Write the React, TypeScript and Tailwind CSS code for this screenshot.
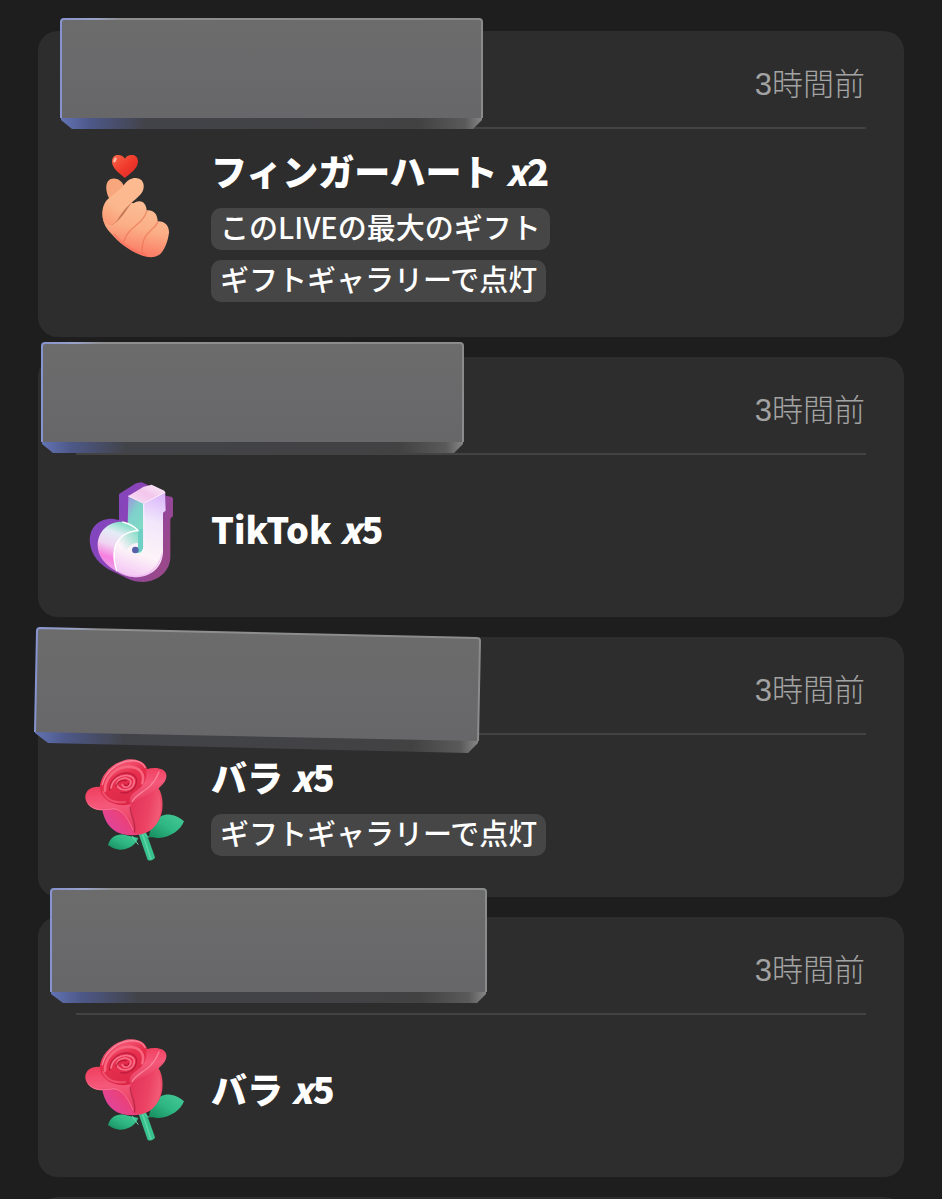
import type { ReactNode } from "react";

type Gift = {
  id: string;
  name: string;
  count: number;
  time: string;
  badges: string[];
  icon: ReactNode;
  slab: ReactNode;
};

function FingerHeartIcon() {
  return (
    <svg
      viewBox="-12 36 348 312"
      className="h-[104px] w-[116px] shrink-0 overflow-visible"
      aria-hidden
    >
      <defs>
        <linearGradient id="heart" x1="0" y1="0" x2="1" y2="1">
          <stop offset="0" stopColor="#f9694a" />
          <stop offset="0.5" stopColor="#f03a2c" />
          <stop offset="1" stopColor="#d92727" />
        </linearGradient>
        <linearGradient
          id="skin"
          gradientUnits="userSpaceOnUse"
          x1="190"
          y1="160"
          x2="150"
          y2="350"
        >
          <stop offset="0" stopColor="#fcc39a" />
          <stop offset="0.55" stopColor="#fbae86" />
          <stop offset="1" stopColor="#fb7360" />
        </linearGradient>
        <linearGradient
          id="index"
          gradientUnits="userSpaceOnUse"
          x1="170"
          y1="120"
          x2="80"
          y2="260"
        >
          <stop offset="0" stopColor="#fdbb91" />
          <stop offset="0.6" stopColor="#fbb78d" />
          <stop offset="1" stopColor="#fb9772" />
        </linearGradient>
      </defs>
      <path
        d="M134 114C120 100 96 86 96 65C96 51 104 44 115 45C124 45 130 49 135 56C139 48 147 44 156 45C167 45 174 53 174 65C173 86 150 101 134 114Z"
        fill="url(#heart)"
      />
      <ellipse
        cx="105"
        cy="60"
        rx="4"
        ry="8"
        fill="#ffd8c8"
        opacity="0.8"
        transform="rotate(25 105 60)"
      />
      <path
        d="M84 168C76 148 76 124 92 117C108 111 124 120 131 136L126 170L92 184Z"
        fill="#f8a67c"
      />
      <path
        d="M68 230C66 204 78 180 98 168L160 190C180 176 199 186 200 211C220 209 233 222 233 244C254 243 268 258 267 278C264 302 254 330 240 343C224 355 200 353 180 344C148 331 116 308 94 281C78 264 70 250 68 230Z"
        fill="url(#skin)"
      />
      <path
        d="M201 212C196 234 176 250 152 270C144 278 136 290 132 304M233 246C228 262 205 274 196 290C188 304 186 320 186 336"
        fill="none"
        stroke="#e8704e"
        strokeWidth="4"
        strokeLinecap="round"
        opacity="0.6"
      />
      <path
        d="M154 186C136 204 130 230 96 252"
        fill="none"
        stroke="#a8593c"
        strokeWidth="6"
        strokeLinecap="round"
        opacity="0.65"
      />
      <path
        d="M68 232C64 204 74 182 92 170C108 158 122 146 134 132C146 114 170 108 184 120C194 130 194 150 182 163C164 182 146 194 128 214C116 230 112 250 92 256C78 254 70 248 68 232Z"
        fill="url(#index)"
      />
      <path
        d="M104 284C126 312 164 336 196 344"
        fill="none"
        stroke="#ff6257"
        strokeWidth="7"
        strokeLinecap="round"
        opacity="0.35"
      />
    </svg>
  );
}

function NoteIcon() {
  return (
    <svg
      viewBox="3 24 348 312"
      className="h-[104px] w-[116px] shrink-0 overflow-visible"
      aria-hidden
    >
      <defs>
        <linearGradient id="noteBack" x1="0" y1="0" x2="1" y2="0.5">
          <stop offset="0" stopColor="#7b47c4" />
          <stop offset="0.5" stopColor="#8a44b8" />
          <stop offset="1" stopColor="#99488c" />
        </linearGradient>
        <linearGradient
          id="noteFace"
          gradientUnits="userSpaceOnUse"
          x1="240"
          y1="70"
          x2="150"
          y2="320"
        >
          <stop offset="0" stopColor="#dcb8fb" />
          <stop offset="0.3" stopColor="#f1e6fb" />
          <stop offset="0.7" stopColor="#fdf4f8" />
          <stop offset="1" stopColor="#f3c3f4" />
        </linearGradient>
        <linearGradient id="noteTop" x1="0" y1="1" x2="1" y2="0">
          <stop offset="0" stopColor="#f8e0f6" />
          <stop offset="0.5" stopColor="#f3c6ec" />
          <stop offset="1" stopColor="#fbf0fb" />
        </linearGradient>
        <linearGradient id="noteSide" x1="0" y1="0" x2="0.4" y2="1">
          <stop offset="0" stopColor="#a78be0" />
          <stop offset="0.4" stopColor="#7fd0cb" />
          <stop offset="1" stopColor="#7fe0c4" />
        </linearGradient>
        <linearGradient id="noteBall" x1="0.6" y1="0" x2="0.3" y2="1">
          <stop offset="0" stopColor="#7edcc4" />
          <stop offset="0.25" stopColor="#e4ecf6" />
          <stop offset="0.5" stopColor="#f0d5f2" />
          <stop offset="0.75" stopColor="#f77fe0" />
          <stop offset="1" stopColor="#e9a6ee" />
        </linearGradient>
        <linearGradient
          id="noteCurl"
          gradientUnits="userSpaceOnUse"
          x1="200"
          y1="190"
          x2="140"
          y2="230"
        >
          <stop offset="0" stopColor="#7cdcc2" />
          <stop offset="1" stopColor="#7cdcc2" stopOpacity="0" />
        </linearGradient>
      </defs>
      <path
        d="M132 72L183 40L200 37L212 42L270 70L273 78L290 80L294 86V138L286 146V262C284 306 250 334 204 336C180 336 164 330 150 322L100 298C60 274 44 240 44 208C46 168 74 146 112 146L132 150Z"
        fill="url(#noteBack)"
      />
      <path
        d="M160 78L204 100V240L180 200L158 168Z"
        fill="url(#noteSide)"
      />
      <path
        d="M160 78L206 50L230 44L268 62L272 70L206 100Z"
        fill="url(#noteTop)"
      />
      <path
        d="M68 226C68 184 100 154 142 155C164 160 178 170 190 182L150 240L124 304C90 284 68 260 68 226Z"
        fill="url(#noteBall)"
      />
      <path
        d="M206 100L270 68L272 122L264 128V246C262 292 228 322 180 322C158 320 138 312 124 302C112 272 114 238 124 218C138 194 162 182 190 181V230H206Z"
        fill="url(#noteFace)"
      />
      <path
        d="M190 182C162 184 138 196 124 220L150 248C160 228 172 218 190 218Z"
        fill="url(#noteCurl)"
      />
      <path
        d="M189 178L204 176V236C204 246 194 252 184 250L189 230Z"
        fill="#6ed0c4"
      />
      <path
        d="M206 100V230C206 244 196 252 184 250"
        fill="none"
        stroke="#fff"
        strokeWidth="3"
      />
      <path
        d="M160 78L206 100L268 68"
        fill="none"
        stroke="#fdeffb"
        strokeWidth="3"
        strokeLinejoin="round"
      />
      <path
        d="M142 156C164 160 178 170 190 182C156 184 124 202 118 240C116 262 118 284 126 304"
        fill="none"
        stroke="#fff"
        strokeWidth="4"
        strokeLinejoin="round"
      />
      <circle cx="181" cy="240" r="10" fill="#5560a8" />
      <path
        d="M126 303C176 334 244 322 262 250"
        fill="none"
        stroke="#efb2f3"
        strokeWidth="4"
        opacity="0.7"
      />
    </svg>
  );
}

function RoseIcon() {
  return (
    <svg
      viewBox="3 24 348 312"
      className="h-[104px] w-[116px] shrink-0 overflow-visible"
      aria-hidden
    >
      <defs>
        <linearGradient id="cup" x1="0.1" y1="0.8" x2="0.9" y2="0.2">
          <stop offset="0" stopColor="#e0459a" />
          <stop offset="0.4" stopColor="#ee3f6c" />
          <stop offset="1" stopColor="#f04a66" />
        </linearGradient>
        <linearGradient id="petal" x1="0.4" y1="0" x2="0.5" y2="1">
          <stop offset="0" stopColor="#f0405f" />
          <stop offset="0.4" stopColor="#f5587a" />
          <stop offset="1" stopColor="#e2385a" />
        </linearGradient>
        <linearGradient id="flank" x1="0" y1="0.2" x2="1" y2="0.5">
          <stop offset="0" stopColor="#e23358" />
          <stop offset="0.6" stopColor="#ec4264" />
          <stop offset="1" stopColor="#f25e78" />
        </linearGradient>
        <linearGradient id="bloom" x1="0.2" y1="0" x2="0.6" y2="1">
          <stop offset="0" stopColor="#f9718d" />
          <stop offset="0.4" stopColor="#e8304f" />
          <stop offset="1" stopColor="#dc2848" />
        </linearGradient>
        <linearGradient id="leaf" x1="0" y1="1" x2="1" y2="0">
          <stop offset="0" stopColor="#158a5c" />
          <stop offset="0.5" stopColor="#2fb783" />
          <stop offset="1" stopColor="#45cb99" />
        </linearGradient>
      </defs>
      <path
        d="M190 250L212 244L240 322C238 330 226 334 218 330Z"
        fill="#38c08d"
      />
      <path d="M202 250L228 328" stroke="#5bd3a6" strokeWidth="5" />
      <path
        d="M222 262C226 222 250 190 286 194C302 196 316 204 327 214C318 240 282 266 246 264C236 262 228 262 222 262Z"
        fill="url(#leaf)"
      />
      <path
        d="M99 285C106 262 124 250 148 254C164 258 178 260 190 264C182 286 158 300 134 299C118 297 108 292 99 285Z"
        fill="url(#leaf)"
      />
      <path
        d="M172 258L184 276L190 284M206 250L222 262"
        fill="none"
        stroke="#62d3a8"
        strokeWidth="3"
      />
      <path
        d="M78 150C80 190 92 222 116 240C146 262 196 260 224 242C254 222 266 188 262 150C258 110 236 90 200 90H100Z"
        fill="url(#cup)"
      />
      <path
        d="M82 112C54 106 34 118 31 138C30 160 48 178 74 181C96 182 114 174 132 182C152 192 168 214 178 250C186 220 182 190 160 160Z"
        fill="url(#petal)"
      />
      <path
        d="M40 162C56 184 92 180 116 176C140 178 160 204 174 240"
        fill="none"
        stroke="#ff8aa6"
        strokeWidth="3"
        strokeLinecap="round"
        opacity="0.6"
      />
      <path
        d="M74 112C76 80 104 44 144 32C166 24 196 28 210 44C222 58 222 84 214 112C204 146 178 166 142 166C104 164 76 142 74 112Z"
        fill="url(#bloom)"
      />
      <path
        d="M82 104C90 66 128 34 170 32C190 32 204 40 210 52"
        fill="none"
        stroke="#fb96aa"
        strokeWidth="4"
        strokeLinecap="round"
        opacity="0.8"
      />
      <path
        d="M90 122C88 80 126 50 162 50C196 52 210 72 202 100"
        fill="none"
        stroke="#f7657f"
        strokeWidth="8"
        strokeLinecap="round"
      />
      <path
        d="M104 120C104 88 130 68 158 69C182 71 190 88 182 106C176 122 156 132 138 128"
        fill="none"
        stroke="#b5173a"
        strokeWidth="4"
        strokeLinecap="round"
        opacity="0.75"
      />
      <path
        d="M108 114C112 88 136 74 158 77C178 80 182 94 174 108C164 122 142 124 130 112C118 98 132 86 150 84C166 86 172 96 164 106C158 114 144 114 142 104"
        fill="none"
        stroke="#f9708a"
        strokeWidth="5"
        strokeLinecap="round"
      />
      <path
        d="M124 108C128 94 140 90 154 92M150 104C154 110 162 106 160 100"
        fill="none"
        stroke="#a8122f"
        strokeWidth="4"
        strokeLinecap="round"
        opacity="0.7"
      />
      <path
        d="M84 126C94 150 120 160 150 156"
        fill="none"
        stroke="#f4607c"
        strokeWidth="6"
        strokeLinecap="round"
        opacity="0.7"
      />
      <path
        d="M214 58C240 50 270 54 274 74C276 92 262 106 246 118C222 132 196 140 172 168C162 156 162 144 170 134C190 116 218 108 214 58Z"
        fill="url(#petal)"
      />
      <path
        d="M246 116C264 156 264 214 224 242C208 250 194 252 178 250C186 216 160 186 170 160C190 140 226 136 246 116Z"
        fill="url(#flank)"
      />
      <path
        d="M172 154C186 126 232 122 252 66"
        fill="none"
        stroke="#ff9aae"
        strokeWidth="4"
        strokeLinecap="round"
        opacity="0.7"
      />
      <path
        d="M166 170C162 192 186 216 178 248"
        fill="none"
        stroke="#a31c3e"
        strokeWidth="4"
        opacity="0.65"
      />
    </svg>
  );
}

/**
 * Grey 3D block laid over the sender. `face` is the front plane, `base` the bevel below it.
 */
function Slab({
  id,
  width,
  height,
  face,
  base,
  className,
}: {
  id: string;
  width: number;
  height: number;
  face: string;
  base: string;
  className: string;
}) {
  return (
    <svg
      width={width}
      height={height}
      viewBox={`0 0 ${width} ${height}`}
      className={`absolute overflow-visible ${className}`}
      aria-hidden
    >
      <defs>
        <linearGradient id={`${id}-face`} x1="0" y1="0" x2="0" y2="1">
          <stop offset="0" stopColor="#6c6c6d" />
          <stop offset="1" stopColor="#676769" />
        </linearGradient>
        <linearGradient id={`${id}-base`} x1="0" y1="0" x2="1" y2="0">
          <stop offset="0" stopColor="#6273b4" />
          <stop offset="0.07" stopColor="#4d5888" />
          <stop offset="0.2" stopColor="#424349" />
          <stop offset="0.85" stopColor="#424243" />
          <stop offset="0.96" stopColor="#5a5a5b" />
          <stop offset="1" stopColor="#868687" />
        </linearGradient>
        <linearGradient id={`${id}-edge`} x1="0" y1="0" x2="1" y2="0">
          <stop offset="0" stopColor="#8793cf" />
          <stop offset="0.08" stopColor="#9aa3c8" />
          <stop offset="0.14" stopColor="#8e8f91" />
          <stop offset="1" stopColor="#8a8b8b" />
        </linearGradient>
      </defs>
      <path d={base} fill={`url(#${id}-base)`} />
      <path d={face} fill={`url(#${id}-face)`} />
      <path
        d={face.replace("Z", "")}
        fill="none"
        stroke={`url(#${id}-edge)`}
        strokeWidth="2"
        strokeLinejoin="round"
      />
    </svg>
  );
}

const gifts: Gift[] = [
  {
    id: "finger-heart",
    name: "フィンガーハート",
    count: 2,
    time: "3時間前",
    badges: ["このLIVEの最大のギフト", "ギフトギャラリーで点灯"],
    icon: <FingerHeartIcon />,
    slab: (
      <Slab
        id="slab-1"
        width={423}
        height={111}
        face="M422 100V4Q422 1 419 1H4Q1 1 1 4V100Z"
        base="M1 99H422V102L413 111H12L1 102Z"
        className="-top-[13px] left-[22px]"
      />
    ),
  },
  {
    id: "tiktok",
    name: "TikTok",
    count: 5,
    time: "3時間前",
    badges: [],
    icon: <NoteIcon />,
    slab: (
      <Slab
        id="slab-2"
        width={423}
        height={111}
        face="M422 100V4Q422 1 419 1H4Q1 1 1 4V100Z"
        base="M1 99H422V102L413 111H12L1 102Z"
        className="-top-[15px] left-[3px]"
      />
    ),
  },
  {
    id: "rose-lit",
    name: "バラ",
    count: 5,
    time: "3時間前",
    badges: ["ギフトギャラリーで点灯"],
    icon: <RoseIcon />,
    slab: (
      <Slab
        id="slab-3"
        width={447}
        height={126}
        face="M444 114L446 14Q446 11 443 11L6 1Q3 1 3 4L1 105Z"
        base="M1 104L444 113V116L434 126L14 116L1 106Z"
        className="-top-[10px] -left-[4px]"
      />
    ),
  },
  {
    id: "rose",
    name: "バラ",
    count: 5,
    time: "3時間前",
    badges: [],
    icon: <RoseIcon />,
    slab: (
      <Slab
        id="slab-4"
        width={437}
        height={115}
        face="M436 104V4Q436 1 433 1H4Q1 1 1 4V104Z"
        base="M1 103H436V106L427 115H13L1 106Z"
        className="-top-[29px] left-3"
      />
    ),
  },
];

function GiftCard({ gift }: { gift: Gift }) {
  const lit = gift.badges.length > 0;

  return (
    <article className="relative rounded-[20px] bg-[#2d2d2d] px-[38px] pb-[35px]">
      <header className="flex h-[98px] items-center justify-end border-b-2 border-[#434343] pt-3 pr-px font-['Liberation_Sans','Noto_Sans_CJK_JP',sans-serif] text-[31px] leading-[40px] font-light text-[#a3a3a3]">
        <time>{gift.time}</time>
      </header>
      <div className="flex items-start gap-[19px] pt-[23px]">
        {gift.icon}
        <div className={lit ? "flex flex-col gap-5" : "self-center pb-1"}>
          <h2 className="text-[36px] leading-[36px] font-black text-white">
            {gift.name} <i>x</i>
            {gift.count}
          </h2>
          {lit && (
            <ul className="flex flex-col items-start gap-[10px]">
              {gift.badges.map((badge) => (
                <li
                  key={badge}
                  className="rounded-[10px] bg-[#464646] px-[9px] pb-[6px] text-[29px] leading-[36px] font-medium text-white"
                >
                  {badge}
                </li>
              ))}
            </ul>
          )}
        </div>
      </div>
      {gift.slab}
    </article>
  );
}

export default function App() {
  return (
    <main
      lang="ja"
      className="flex min-h-screen flex-col gap-5 bg-[#1e1e1e] px-[38px] pt-[31px] font-['Noto_Sans_CJK_JP',sans-serif]"
    >
      {gifts.map((gift) => (
        <GiftCard key={gift.id} gift={gift} />
      ))}
      {/* top edge of the next card in the list */}
      <div className="h-[2px] overflow-hidden">
        <div className="h-10 rounded-t-[20px] bg-[#2d2d2d]" />
      </div>
    </main>
  );
}
